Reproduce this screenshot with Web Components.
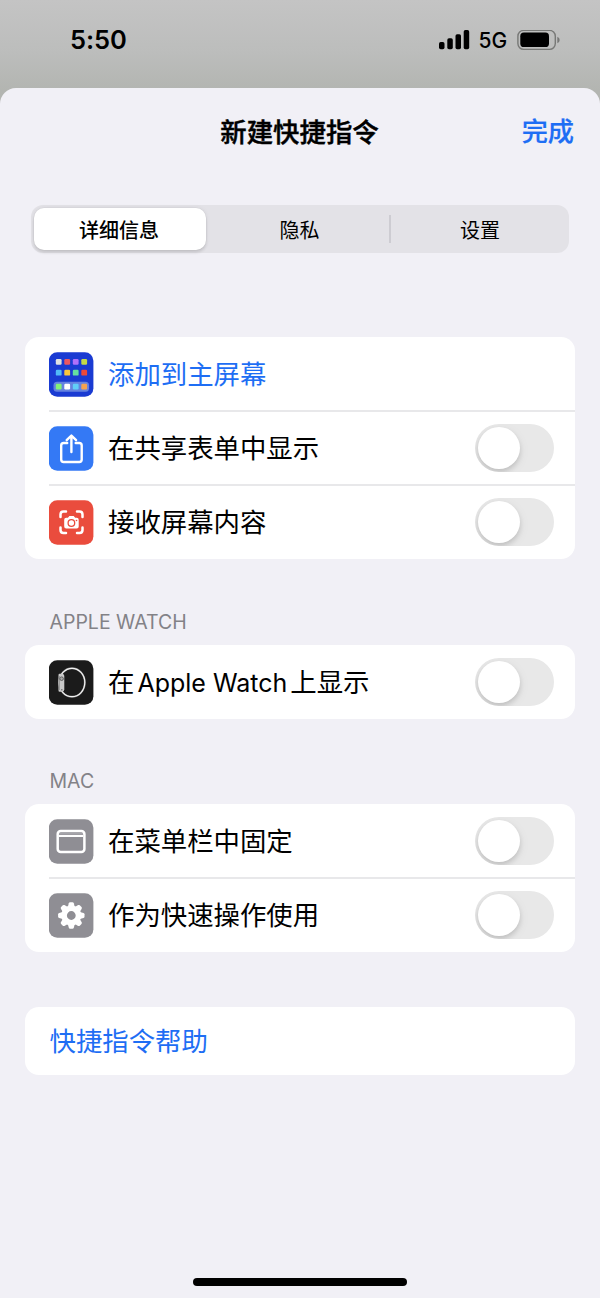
<!DOCTYPE html>
<html lang="zh-CN">
<head>
<meta charset="utf-8">
<title>新建快捷指令</title>
<style>
html,body{margin:0;padding:0}
body{width:600px;height:1298px;overflow:hidden;background:#f1f0f6;font-family:Inter,"Noto Sans CJK SC",sans-serif;color:#000}
</style>
</head>
<body>
<phone-screen></phone-screen>
<script>
const define = (name, html, setup) => {
  const tpl = document.createElement('template');
  tpl.innerHTML = html;
  customElements.define(name, class extends HTMLElement {
    constructor() {
      super();
      this.attachShadow({mode: 'open'}).append(tpl.content.cloneNode(true));
    }
    connectedCallback() { if (setup) setup(this, this.shadowRoot); }
  });
};

define('status-bar', `
<style>
:host{display:flex;justify-content:space-between;align-items:flex-start;height:104px;box-sizing:border-box;padding:24px 40px 0 70px;background:linear-gradient(#c4c4c4,#bcbdbc 52px,#b3b5b1 90px)}
time{font-size:25.5px;font-weight:600;line-height:32px;letter-spacing:-.1px}
.r{display:flex;align-items:center;height:32px}
.net{font-size:21px;font-weight:450;line-height:32px;margin:1px 10px 0 9px;letter-spacing:-.1px}
svg{display:block}
</style>
<time>5:50</time>
<div class="r">
<svg width="31" height="20" viewBox="0 0 31 20"><rect x="0" y="12" width="5.5" height="7.3" rx="1.7"/><rect x="8.3" y="8.2" width="5.5" height="11.1" rx="1.7"/><rect x="16.5" y="4.3" width="5.5" height="15" rx="1.7"/><rect x="24.7" y="0" width="5.5" height="19.3" rx="1.7"/></svg>
<span class="net">5G</span>
<svg width="43" height="21" viewBox="0 0 43 21"><rect x=".9" y=".4" width="37.4" height="19" rx="5.8" fill="none" stroke="#777876" stroke-width="1.4"/><rect x="3.3" y="2.6" width="28.7" height="14.4" rx="3.6"/><path d="M40.3 6.8q2.4 1 2.4 3.2t-2.4 3.2z" fill="#777876"/></svg>
</div>`);

define('nav-bar', `
<style>
:host{display:grid;grid-template-columns:1fr auto 1fr;align-items:center;height:88px;padding:0 26px 0 25px}
b{grid-column:2;font-size:26.4px;font-weight:500;line-height:40px;-webkit-text-stroke:.45px currentColor}
a{justify-self:end;font-size:26.2px;font-weight:500;line-height:40px;color:#1e6ef4;-webkit-text-stroke:.2px currentColor}
</style>
<b><slot></slot></b><a><slot name="action"></slot></a>`);

define('segment-item', `
<style>
:host{display:flex;align-items:center;justify-content:center;font-size:20px;line-height:30px;border-radius:10px;box-sizing:border-box;padding-top:3px}
:host([selected]){background:#fff;font-weight:500;padding-right:2px;box-shadow:0 0 0 .5px #0000000a,0 3px 3px #00000018,0 0 5px #00000012}
</style><slot></slot>`);

define('segmented-control', `
<style>
:host{display:grid;grid-template-columns:172px 1px 183px 1px 178px;height:48px;margin:0 31px;border-radius:12px;background:#e3e2e7;padding:3px 0 3px 3px;box-sizing:border-box}
i{width:2px;height:28px;align-self:center;margin-left:-1px;background:#cdccd2}
i:first-of-type{visibility:hidden}
::slotted(*){height:42px}
::slotted([slot=b]){padding-left:2px}
</style><slot name="a"></slot><i></i><slot name="b"></slot><i></i><slot name="c"></slot>`);

define('toggle-switch', `
<style>
:host{display:flex;align-items:center;width:79px;height:48px;border-radius:24px;background:#e8e8e8;overflow:hidden;box-sizing:border-box;padding-left:3px;flex:none}
span{width:42px;height:42px;border-radius:50%;background:#fff;box-shadow:0 3px 5px #00000022,0 3px 12px #00000010}
</style><span></span>`);

const icons = {
  home: ['#1a3bd2', `<rect x="4.5" y="29.7" width="35.5" height="10" rx="3.5" fill="#6482df"/>` +
    [['#e0e2e2','#ed5762','#b070fa','#c4da47'],['#52baf7','#fac63c','#66dfa0','#ed4938'],['#84f276','#fff','#61cef8','#f5a34f']].map((row, y) =>
      row.map((c, x) => `<rect x="${6.8 + x * 8.5}" y="${[7,17.8,31.7][y]}" width="5.8" height="5.8" rx="1.2" fill="${c}"/>`).join('')).join('')],
  share: ['#3479f5', `<g fill="none" stroke="#fff" stroke-width="2.4" stroke-linecap="round" stroke-linejoin="round"><path d="M18.2 17H14.7q-2.5 0-2.5 2.5V33.500q0 2.500 2.500 2.500H30.200q2.500 0 2.500-2.500V19.500q0-2.500-2.500-2.500H26.700"/><path d="M22.400 26V10.200M17.700 14.200l4.700-4.700 4.700 4.700"/></g>`],
  capture: ['#ea4c3d', `<g fill="none" stroke="#fff" stroke-width="2.5" stroke-linecap="round"><path d="M11.500 17v-2.500q0-3 3-3H17M28 11.500h2.500q3 0 3 3V17M33.500 27.500v2.500q0 3-3 3H28M17 33h-2.500q-3 0-3-3v-2.500"/></g><path d="M17.200 17.700h1.700l1.500-1.700h4.300l1.500 1.700h1.500q2 0 2 2v6.700q0 2-2 2H17.200q-2 0-2-2v-6.700q0-2 2-2z" fill="#fff"/><circle cx="22.400" cy="23" r="3.300" fill="none" stroke="#ea4c3d" stroke-width="1.300"/><circle cx="27.500" cy="20.500" r=".8" fill="#ea4c3d"/>`],
  watch: ['#1b1b1b', `<ellipse cx="23" cy="22.500" rx="12.800" ry="14.200" fill="none" stroke="#777" stroke-width="1.900"/><ellipse cx="23" cy="22.500" rx="12.800" ry="14.200" fill="none" stroke="#f2f2f2" stroke-width="1.200"/><path d="M10.500 13.700h2.800q2 .2 2 2.300v13.500q0 2-2 2.300h-2.800q-1-.1-1-1.300V15q0-1.200 1-1.300z" fill="#c9c9c9"/><path d="M10.300 16v14" stroke="#929292"/><circle cx="12.600" cy="18.700" r="1.800" fill="#aaa" stroke="#4c4c4c" stroke-width=".8"/><path d="M12 29.800h1.500" stroke="#444" stroke-width=".8"/>`],
  menu: ['#8f8e94', `<rect x="8.700" y="11.900" width="26.700" height="21" rx="3" fill="none" stroke="#fff" stroke-width="2.500"/><path d="M10 17h24" stroke="#fff" stroke-width="2.100"/><path d="M10 14.900h24" stroke="#b4b3b8" stroke-width="1"/>`],
  gear: ['#8f8e94', `<circle cx="22.300" cy="22.500" r="7.200" fill="none" stroke="#fff" stroke-width="5.600"/>` +
    [0,45,90,135,180,225,270,315].map(a => `<path transform="translate(-.2 0) rotate(${a} 22.5 22.5)" d="M19 14l1-3.700q.3-1 1.300-1h2.400q1 0 1.300 1l1 3.700z" fill="#fff"/>`).join('')]
};

define('app-icon', `
<style>:host{display:block;width:45px;height:45px;flex:none}svg{display:block}</style><svg width="45" height="45" viewBox="0 0 45 45"></svg>`,
(el, root) => {
  const [bg, art] = icons[el.getAttribute('name')];
  root.querySelector('svg').innerHTML = `<rect x="-.2" y=".2" width="44.600" height="44.500" rx="8.500" fill="${bg}"/>` + art;
});

define('list-row', `
<style>
:host{display:flex;height:74px;padding-left:24px;box-sizing:border-box}
.body{display:flex;flex:1;align-items:center;padding-right:21px;box-sizing:border-box;position:relative}
:host([divided]) .body::before{content:"";position:absolute;left:0;right:0;top:-1px;height:2px;background:#e8e8ea}
.label{flex:1;margin-left:14px;font-size:26.400px;line-height:40px;white-space:nowrap}
:host([link]) .label{color:#1e6ef4}
::slotted(em){font-style:normal;font-size:25px}
</style>
<div class="body"><slot name="icon"></slot><span class="label"><slot></slot></span><slot name="end"></slot></div>`);

define('list-group', `
<style>
:host{display:block;margin:0 25px}
h2{margin:0;padding-left:24.500px;font-size:19.500px;font-weight:400;line-height:24px;color:#838287;height:35px}
.card{background:#fff;border-radius:14px;overflow:hidden}
</style>
<h2></h2><div class="card"><slot></slot></div>`,
(el, root) => {
  const h = root.querySelector('h2'), t = el.getAttribute('header');
  if (t) h.textContent = t; else h.remove();
});

define('help-link', `
<style>:host{display:flex;align-items:center;height:68px;padding:0 0 0 24.500px;box-sizing:border-box;font-size:26.400px;line-height:40px;color:#1e6ef4}</style><slot></slot>`);

define('home-indicator', `
<style>:host{display:block;width:214px;height:8px;border-radius:4px;background:#000;margin:auto auto 12px}</style>`);

define('phone-screen', `
<style>
:host{display:flex;flex-direction:column;width:600px;height:1298px}
main{flex:1;display:flex;flex-direction:column;margin-top:-16px;border-radius:16px 16px 0 0;background:#f1f0f6}
segmented-control{margin-top:29px}
.g1{margin-top:84px}.g2{margin-top:51px}.g3{margin-top:50px}.g4{margin-top:55px}
</style>
<status-bar></status-bar>
<main>
<nav-bar>新建快捷指令<span slot="action">完成</span></nav-bar>
<segmented-control><segment-item slot="a" selected>详细信息</segment-item><segment-item slot="b">隐私</segment-item><segment-item slot="c">设置</segment-item></segmented-control>
<list-group class="g1">
<list-row link><app-icon slot="icon" name="home"></app-icon>添加到主屏幕</list-row>
<list-row divided><app-icon slot="icon" name="share"></app-icon>在共享表单中显示<toggle-switch slot="end"></toggle-switch></list-row>
<list-row divided><app-icon slot="icon" name="capture"></app-icon>接收屏幕内容<toggle-switch slot="end"></toggle-switch></list-row>
</list-group>
<list-group class="g2" header="APPLE WATCH">
<list-row><app-icon slot="icon" name="watch"></app-icon>在<em style="margin:0 3px">Apple Watch</em>上显示<toggle-switch slot="end"></toggle-switch></list-row>
</list-group>
<list-group class="g3" header="MAC">
<list-row><app-icon slot="icon" name="menu"></app-icon>在菜单栏中固定<toggle-switch slot="end"></toggle-switch></list-row>
<list-row divided><app-icon slot="icon" name="gear"></app-icon>作为快速操作使用<toggle-switch slot="end"></toggle-switch></list-row>
</list-group>
<list-group class="g4"><help-link>快捷指令帮助</help-link></list-group>
<home-indicator></home-indicator>
</main>`);
</script>
</body>
</html>
